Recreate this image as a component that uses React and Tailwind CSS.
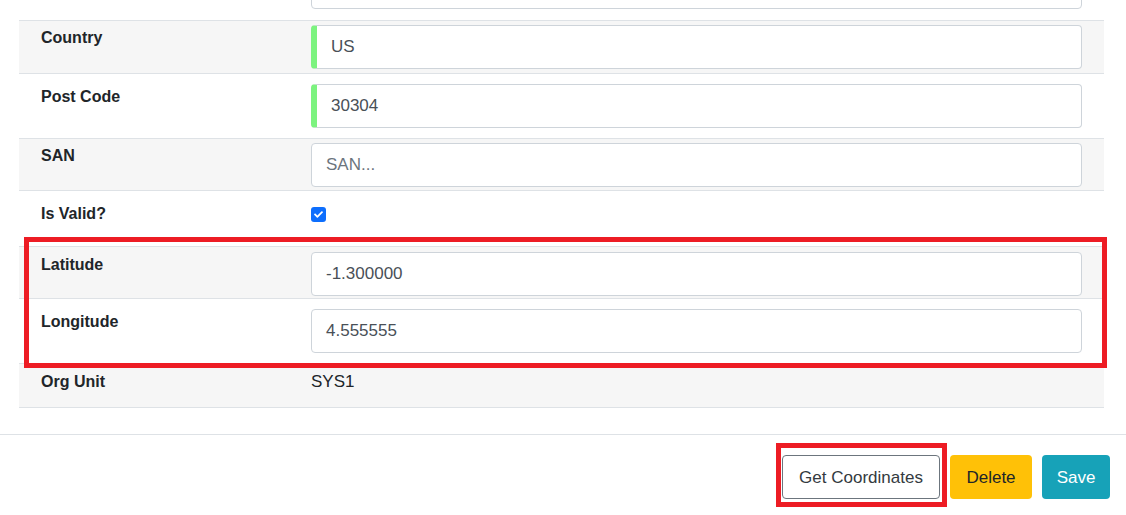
import { FaCheck } from 'react-icons/fa'

const rows = [
  { label: 'Country', value: 'US', valid: true, bg: true, h: 'h-[53px]', pt: 'pt-[4px]' },
  { label: 'Post Code', value: '30304', valid: true, bg: false, h: 'h-[65px]', pt: 'pt-[10px]' },
  { label: 'SAN', placeholder: 'SAN...', bg: true, h: 'h-[52px]', pt: 'pt-[4px]' },
  { label: 'Is Valid?', checkbox: true, bg: false, h: 'h-[56px]', pt: 'pt-[10px]' },
  { label: 'Latitude', value: '-1.300000', bg: true, h: 'h-[52px]', pt: 'pt-[5px]' },
  { label: 'Longitude', value: '4.555555', bg: false, h: 'h-[65px]', pt: 'pt-[10px]' },
  { label: 'Org Unit', text: 'SYS1', bg: true, h: 'h-[44px]', pt: 'pt-[5px]' },
]

const Field = ({ value, placeholder, valid }) => (
  <div
    className={`flex-1 h-[44px] flex items-center bg-white rounded-[4px] border border-[#ced4da] pl-[14px] text-[17px] ${
      valid ? 'border-l-[6px] border-l-[#7cf37f]' : ''
    }`}
  >
    {value ? (
      <span className="text-[#495057]">{value}</span>
    ) : (
      <span className="text-[#6c757d]">{placeholder}</span>
    )}
  </div>
)

const App = () => {
  return (
    <div className="relative w-[1126px] h-[515px] bg-white overflow-hidden font-['Liberation_Sans',Arial,sans-serif] text-[#212529]">
      <div className="mx-[19px] w-[1085px]">
        {/* partial row cut off at the top */}
        <div className="h-[21px] flex items-end pb-[11px] px-[22px] border-b border-[#dee2e6] overflow-hidden">
          <div className="w-[270px] shrink-0" />
          <div className="flex-1 h-[44px] shrink-0 bg-white rounded-[4px] border border-[#ced4da]" />
        </div>

        {rows.map((row) => (
          <div
            key={row.label}
            className={`${row.h} ${row.pt} flex items-start px-[22px] border-b border-[#dee2e6] ${
              row.bg ? 'bg-[#f6f6f6]' : 'bg-white'
            }`}
          >
            <div className="w-[270px] shrink-0 mt-[1px] text-[16px] leading-[24px] font-bold">{row.label}</div>
            {row.checkbox ? (
              <div className="mt-[6px] w-[15px] h-[15px] rounded-[3px] bg-[#0d6efd] flex items-center justify-center">
                <FaCheck className="text-white" size={9} />
              </div>
            ) : row.text ? (
              <div className="mt-[1px] text-[17px] leading-[24px] text-[#212529]">{row.text}</div>
            ) : (
              <Field value={row.value} placeholder={row.placeholder} valid={row.valid} />
            )}
          </div>
        ))}
      </div>

      {/* footer */}
      <div className="mt-[26px] border-t border-[#dee2e6] flex justify-end gap-[10px] pt-[20px] pr-[16px]">
        <button className="w-[158px] h-[44px] pt-[2px] rounded-[4px] border border-[#6c757d] bg-white text-[17px] text-[#343a40] flex items-center justify-center">
          Get Coordinates
        </button>
        <button className="w-[82px] h-[44px] pt-[2px] rounded-[4px] bg-[#ffc107] text-[17px] text-[#212529] flex items-center justify-center">
          Delete
        </button>
        <button className="w-[68px] h-[44px] pt-[2px] rounded-[4px] bg-[#17a2b8] text-[17px] text-white flex items-center justify-center">
          Save
        </button>
      </div>

      {/* annotation boxes */}
      <div className="absolute left-[24px] top-[237px] w-[1083px] h-[131px] border-[5px] border-[#ed1c24] pointer-events-none" />
      <div className="absolute left-[776px] top-[443px] w-[171px] h-[64px] border-[5px] border-[#ed1c24] pointer-events-none" />
    </div>
  )
}

export default App
